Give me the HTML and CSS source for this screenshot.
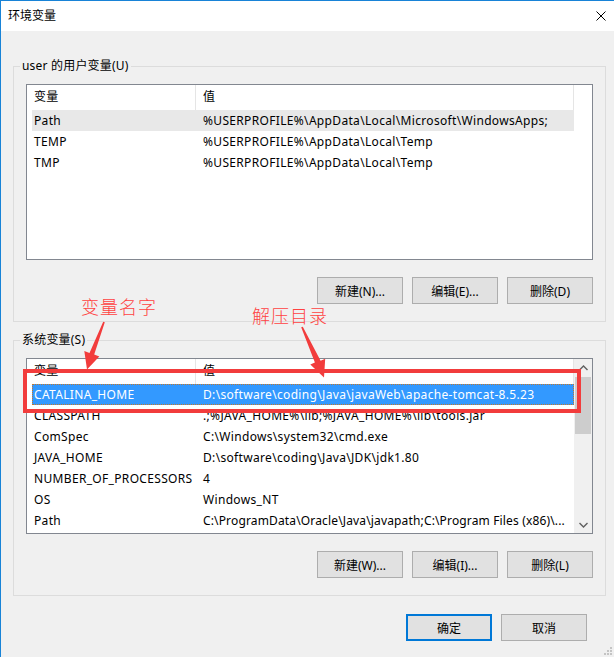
FILE: index.html
```html
<!DOCTYPE html>
<html lang="zh-CN">
<head>
<meta charset="utf-8">
<title>环境变量</title>
<link rel="stylesheet" href="styles.css">
</head>
<body>
<div class="window">
  <header class="titlebar">
    <span class="title">环境变量</span>
    <svg class="close" width="10" height="10" viewBox="0 0 10 10"><path d="M0.5 0.5 L9.5 9.5 M9.5 0.5 L0.5 9.5" stroke="#000" stroke-width="1" fill="none"/></svg>
  </header>
  <main class="content">
    <fieldset class="group">
      <legend>user 的用户变量(U)</legend>
      <div class="listbox">
        <div class="listarea noscroll">
          <div class="row head"><span class="c1">变量</span><span class="c2">值</span></div>
          <div class="row hover"><span class="c1">Path</span><span class="c2">%USERPROFILE%\AppData\Local\Microsoft\WindowsApps;</span></div>
          <div class="row"><span class="c1">TEMP</span><span class="c2">%USERPROFILE%\AppData\Local\Temp</span></div>
          <div class="row"><span class="c1">TMP</span><span class="c2">%USERPROFILE%\AppData\Local\Temp</span></div>
        </div>
      </div>
      <div class="buttons">
        <button class="btn">新建(N)...</button>
        <button class="btn">编辑(E)...</button>
        <button class="btn">删除(D)</button>
      </div>
    </fieldset>
    <fieldset class="group second">
      <legend>系统变量(S)</legend>
      <div class="listbox">
        <div class="listarea">
          <div class="row head"><span class="c1">变量</span><span class="c2">值</span></div>
          <div class="row selected"><span class="c1">CATALINA_HOME</span><span class="c2">D:\software\coding\Java\javaWeb\apache-tomcat-8.5.23</span></div>
          <div class="row"><span class="c1">CLASSPATH</span><span class="c2">.;%JAVA_HOME%\lib;%JAVA_HOME%\lib\tools.jar</span></div>
          <div class="row"><span class="c1">ComSpec</span><span class="c2">C:\Windows\system32\cmd.exe</span></div>
          <div class="row"><span class="c1">JAVA_HOME</span><span class="c2">D:\software\coding\Java\JDK\jdk1.80</span></div>
          <div class="row"><span class="c1">NUMBER_OF_PROCESSORS</span><span class="c2">4</span></div>
          <div class="row"><span class="c1">OS</span><span class="c2">Windows_NT</span></div>
          <div class="row"><span class="c1">Path</span><span class="c2 tight">C:\ProgramData\Oracle\Java\javapath;C:\Program Files (x86)\...</span></div>
        </div>
        <div class="scrollbar">
          <div class="sb-btn"><svg width="9" height="6" viewBox="0 0 9 6"><path d="M0.5 5 L4.5 1 L8.5 5" stroke="#606060" stroke-width="1.4" fill="none"/></svg></div>
          <div class="sb-track"><div class="sb-thumb"></div></div>
          <div class="sb-btn"><svg width="9" height="6" viewBox="0 0 9 6"><path d="M0.5 1 L4.5 5 L8.5 1" stroke="#606060" stroke-width="1.4" fill="none"/></svg></div>
        </div>
      </div>
      <div class="buttons">
        <button class="btn">新建(W)...</button>
        <button class="btn">编辑(I)...</button>
        <button class="btn">删除(L)</button>
      </div>
    </fieldset>
  </main>
  <footer class="dialog-buttons">
    <button class="btn default">确定</button>
    <button class="btn">取消</button>
  </footer>
</div>

<div class="annot-box"></div>
<span class="annot-text name">变量名字</span>
<span class="annot-text dir">解压目录</span>
<svg class="arrows" width="614" height="657" viewBox="0 0 614 657">
  <polygon fill="#f23c3c" points="104.8,322.3 94.2,354.6 99.3,356.5 87,369.5 84.3,351.0 89.5,352.9 103.2,321.7"/>
  <polygon fill="#f23c3c" points="301.2,327.3 314.9,362.6 310.3,364.6 324,377.5 325.2,358.8 320.6,360.8 302.8,326.7"/>
</svg>
<svg class="grip" width="9" height="9" viewBox="0 0 9 9">
  <rect x="7" y="1" width="2" height="2" fill="#c4c4c4"/>
  <rect x="4" y="4" width="2" height="2" fill="#c4c4c4"/>
  <rect x="7" y="4" width="2" height="2" fill="#c4c4c4"/>
  <rect x="1" y="7" width="2" height="2" fill="#c4c4c4"/>
  <rect x="4" y="7" width="2" height="2" fill="#c4c4c4"/>
  <rect x="7" y="7" width="2" height="2" fill="#c4c4c4"/>
</svg>
</body>
</html>
```

FILE: styles.css
```css
* { box-sizing: border-box; }

html, body {
  margin: 0;
  padding: 0;
}

body {
  position: relative;
  width: 614px;
  height: 657px;
  overflow: hidden;
  font-family: "Segoe UI", "Noto Sans", "Noto Sans CJK SC", sans-serif;
  font-size: 12px;
  color: #000;
  background: #f0f0f0;
}

.window {
  height: 657px;
  background: #f0f0f0;
  border-left: 1px solid #1883d7;
  border-top: 1px solid #1883d7;
}

.titlebar {
  height: 30px;
  background: #fff;
  display: flex;
  align-items: center;
  justify-content: space-between;
  padding: 0 8px 0 7px;
}

.title {
  font-size: 12px;
  line-height: 16px;
}

.close { display: block; }

.content {
  padding: 0 8px 0 12px;
}

.group {
  margin: 27px 0 0;
  padding: 0 0 17px;
  border: 1px solid #dcdcdc;
  min-width: 0;
}

.group.second {
  margin-top: 10px;
}

.group legend {
  margin-left: 6px;
  padding: 0 2px;
  font-size: 12px;
  line-height: 16px;
  letter-spacing: 0.2px;
}

.listbox {
  margin: 10px 12px 0;
  height: 176px;
  border: 1px solid #828790;
  background: #fff;
  display: flex;
}

.listarea {
  flex: 1;
  min-width: 0;
  padding-left: 5px;
  overflow: hidden;
}

.listarea.noscroll {
  padding-right: 18px;
}

.row {
  display: grid;
  grid-template-columns: 164px 1fr;
  height: 21px;
  line-height: 21px;
  white-space: nowrap;
  letter-spacing: 0.33px;
}

.row span {
  overflow: hidden;
}

.row .c1 { padding-left: 2px; }
.row .c2 { padding-left: 7px; }
.row .c2.tight { letter-spacing: 0.15px; }

.row.head {
  height: 25px;
  line-height: 24px;
}

.row.head .c1 { border-right: 1px solid #e5e5e5; }
.row.head .c2 { border-right: 1px solid #e5e5e5; }

.row.hover { background: #e8e8e8; }

.row.selected {
  background: #3399ff;
  color: #fff;
  outline: 1px dotted #c4782a;
  outline-offset: -1px;
}

.scrollbar {
  width: 18px;
  background: #f0f0f0;
  display: flex;
  flex-direction: column;
}

.sb-btn {
  height: 17px;
  display: flex;
  align-items: center;
  justify-content: center;
}

.sb-track {
  flex: 1;
}

.sb-thumb {
  margin: 1px 1px 0;
  height: 57px;
  background: #cdcdcd;
}

.buttons {
  margin: 17px 12px 0;
  display: flex;
  justify-content: flex-end;
  gap: 9px;
}

.btn {
  width: 86px;
  height: 27px;
  padding: 0;
  border: 1px solid #adadad;
  background: #e1e1e1;
  font-family: inherit;
  font-size: 12px;
  color: #000;
}

.btn.default {
  border: 2px solid #0078d7;
}

.dialog-buttons {
  margin-top: 18px;
  padding-right: 27px;
  display: flex;
  justify-content: flex-end;
  gap: 9px;
}

.annot-box {
  position: absolute;
  left: 23px;
  top: 369px;
  width: 558px;
  height: 44px;
  border: 4px solid #f23c3c;
}

.annot-text {
  position: absolute;
  font-family: "Noto Sans CJK SC", sans-serif;
  font-size: 18px;
  font-weight: 300;
  line-height: 20px;
  color: #ff4242;
  letter-spacing: 1px;
}

.annot-text.name { left: 81px; top: 296px; }
.annot-text.dir { left: 252px; top: 305px; }

.arrows {
  position: absolute;
  left: 0;
  top: 0;
}

.grip {
  position: absolute;
  right: 2px;
  bottom: 2px;
}
```
